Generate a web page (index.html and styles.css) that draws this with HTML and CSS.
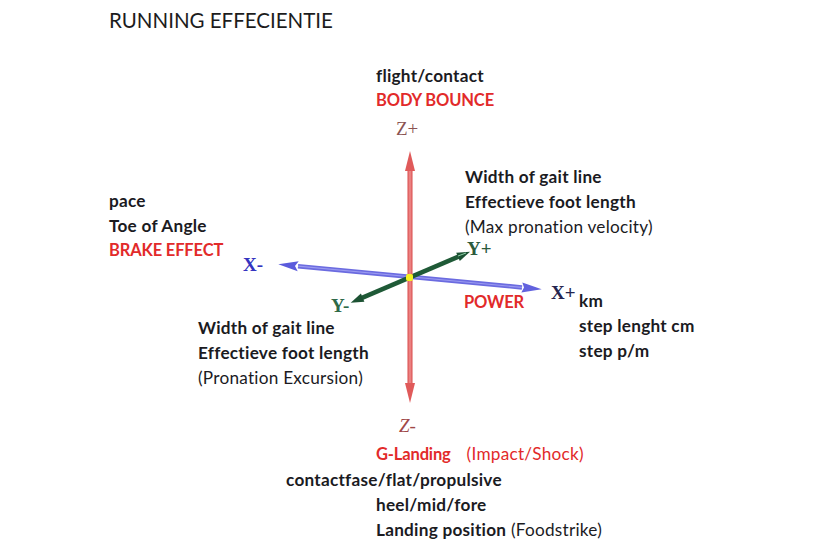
FILE: index.html
```
<!DOCTYPE html>
<html lang="nl">
<head>
<meta charset="utf-8">
<title>Running effecientie</title>
<link rel="stylesheet" href="styles.css">
</head>
<body>
<div class="page">
  <h1 class="title">RUNNING EFFECIENTIE</h1>

  <svg class="axes" width="830" height="560" viewBox="0 0 830 560" xmlns="http://www.w3.org/2000/svg">
    <defs>
      <linearGradient id="redShaft" x1="0" y1="0" x2="1" y2="0">
        <stop offset="0" stop-color="#d84a4a"/>
        <stop offset="0.5" stop-color="#f08d8d"/>
        <stop offset="1" stop-color="#d84a4a"/>
      </linearGradient>
    </defs>
    <!-- X axis -->
    <line x1="298" y1="266.2" x2="522" y2="287.4" stroke="#6b6be0" stroke-width="4.5"/>
    <line x1="298" y1="266.2" x2="522" y2="287.4" stroke="#9a9af0" stroke-width="1.2"/>
    <polygon points="278.3,264.3 297.7,271.2 295,266 298.7,261.2" fill="#5b5bdc"/>
    <polygon points="541.7,289.3 521.3,292.4 524,287.6 522.3,282.4" fill="#6262de"/>
    <!-- Y axis -->
    <line x1="362" y1="297.9" x2="458.5" y2="256.6" stroke="#1f5a37" stroke-width="4.5"/>
    <polygon points="470,251.7 459.8,260.9 456.2,252.7" fill="#1c5233"/>
    <polygon points="350.7,302.7 364.4,301.7 360.9,293.5" fill="#1c5233"/>
    <line x1="458" y1="256" x2="466" y2="253" stroke="#8fd0a8" stroke-width="1"/>
    <!-- Z axis -->
    <rect x="407.5" y="170" width="5" height="214" fill="url(#redShaft)"/>
    <polygon points="410,151 415,171 405,171" fill="#e05a5a"/>
    <polygon points="410,403 415,383 405,383" fill="#e05a5a"/>
    <!-- origin -->
    <rect x="406" y="274" width="7" height="7" rx="2" fill="#f4f020"/>

    <text class="ax ax-z" x="396" y="135">Z+</text>
    <text class="ax ax-z ax-zm" x="399" y="432">Z-</text>
    <text class="ax ax-xm" x="243" y="271">X-</text>
    <text class="ax ax-xp" x="551" y="299">X+</text>
    <text class="ax ax-yp" x="467" y="255">Y+</text>
    <text class="ax ax-ym" x="331" y="312">Y-</text>
  </svg>

  <div class="label lbl-top">
    <div class="b">flight/contact</div>
    <div class="b red caps">BODY BOUNCE</div>
  </div>

  <div class="label lbl-left">
    <div class="b">pace</div>
    <div class="b">Toe of Angle</div>
    <div class="b red caps">BRAKE EFFECT</div>
  </div>

  <div class="label lbl-yplus">
    <div class="b">Width of gait line</div>
    <div class="b">Effectieve foot length</div>
    <div>(Max pronation velocity)</div>
  </div>

  <div class="label lbl-power b red caps">POWER</div>

  <div class="label lbl-xplus">
    <div class="b">km</div>
    <div class="b">step lenght cm</div>
    <div class="b">step p/m</div>
  </div>

  <div class="label lbl-yminus">
    <div class="b">Width of gait line</div>
    <div class="b">Effectieve foot length</div>
    <div>(Pronation Excursion)</div>
  </div>

  <div class="label lbl-bottom">
    <div class="row-g"><span class="b red caps">G-Landing</span><span class="red impact">(Impact/Shock)</span></div>
    <div class="b wide">contactfase/flat/propulsive</div>
    <div class="b">heel/mid/fore</div>
    <div><span class="b">Landing position</span> (Foodstrike)</div>
  </div>
</div>
</body>
</html>
```
FILE: styles.css
```
html, body {
  margin: 0;
  padding: 0;
  background: #ffffff;
}

.page {
  position: relative;
  width: 830px;
  height: 560px;
  overflow: hidden;
  font-family: "Lato", "Open Sans", sans-serif;
  color: #1b1b1f;
  font-size: 17.2px;
  letter-spacing: 0.25px;
  line-height: 25px;
}

.title {
  margin: 0;
  padding: 7px 0 0 109px;
  font-size: 20.5px;
  font-weight: 400;
  line-height: 26px;
  color: #1c1c1c;
  letter-spacing: 0;
}

.axes {
  position: absolute;
  left: 0;
  top: 0;
}

.ax {
  font-family: "Liberation Serif", "DejaVu Serif", serif;
  font-size: 19px;
  font-weight: 700;
  letter-spacing: 0;
}
.ax-z { fill: #8a5353; font-weight: 400; }
.ax-zm { font-style: italic; fill: #a04848; }
.ax-xm { fill: #3434c0; }
.ax-xp { fill: #25254f; }
.ax-yp { fill: #2c5a3d; }
.ax-ym { fill: #2f6a48; }

.label {
  position: absolute;
  white-space: nowrap;
}

.b { font-weight: 700; }
.red { color: #e22a2a; }
.caps { font-size: 16.5px; letter-spacing: -0.15px; }
.impact { margin-left: 16px; font-weight: 400; }

.lbl-top { left: 376px; top: 63px; }
.lbl-left { left: 109px; top: 188px; }
.lbl-yplus { left: 465px; top: 164px; }
.lbl-power { left: 464px; top: 290px; }
.lbl-xplus { left: 579px; top: 288px; }
.lbl-yminus { left: 198px; top: 315px; }
.lbl-bottom { left: 376px; top: 441px; }
.lbl-bottom .wide { margin-left: -90px; }
```
